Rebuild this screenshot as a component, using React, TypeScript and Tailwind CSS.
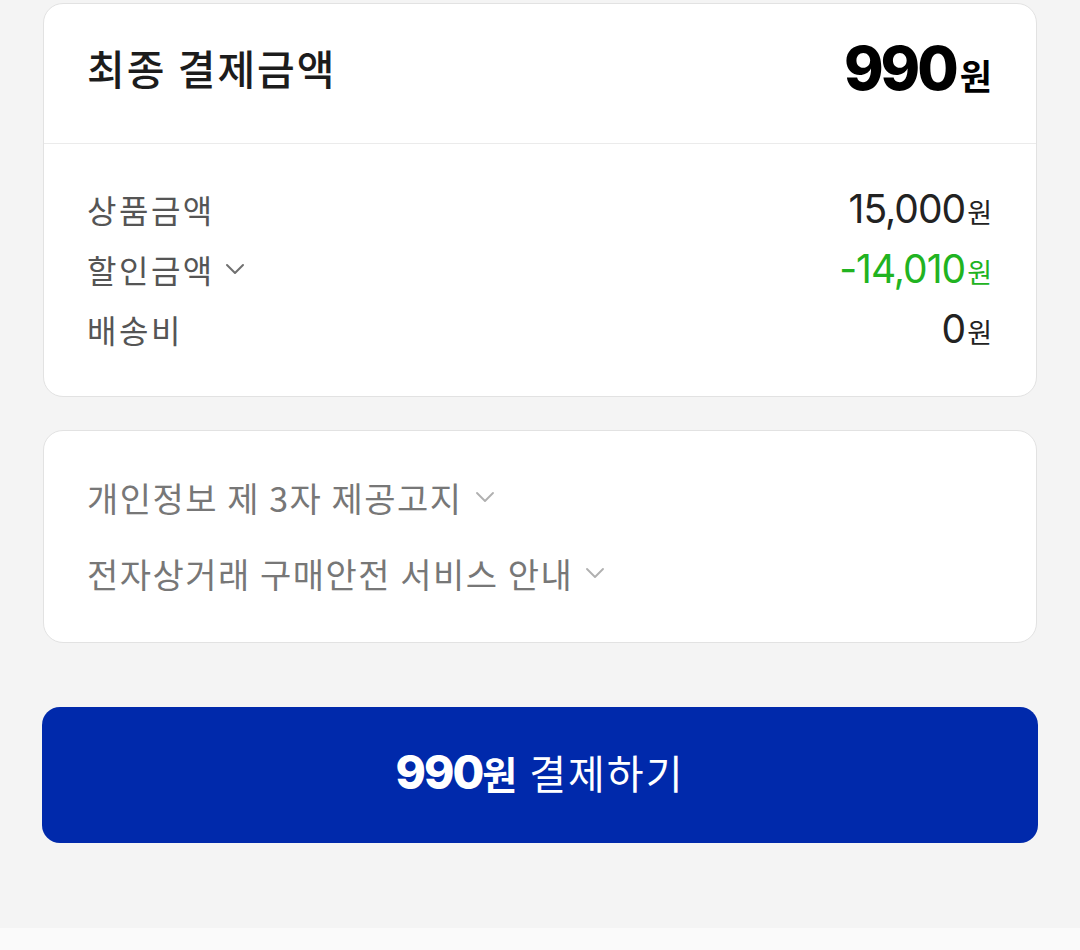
import { ChevronDown } from "lucide-react";

const kr = { fontFamily: "'Noto Sans CJK KR', 'Noto Sans', sans-serif" };
const num = { fontFamily: "Inter, 'Noto Sans CJK KR', sans-serif" };

interface Row {
  label: string;
  amount: string;
  green?: boolean;
  toggle?: boolean;
}

const rows: Row[] = [
  { label: "상품금액", amount: "15,000" },
  { label: "할인금액", amount: "-14,010", green: true, toggle: true },
  { label: "배송비", amount: "0" },
];

const notices = ["개인정보 제 3자 제공고지", "전자상거래 구매안전 서비스 안내"];

const App = () => {
  return (
    <div className="w-[1080px] h-[950px] bg-[#f4f4f4] flex flex-col overflow-hidden" style={kr}>
      <div className="px-[43px] pt-[3px]">
        {/* 결제금액 카드 */}
        <div className="bg-white border border-[#e2e2e2] rounded-[20px]">
          <div className="h-[140px] flex items-center justify-between pl-[43px] pr-[44px] pb-[12px] border-b border-[#ebebeb]">
            <span className="text-[41px] font-medium text-[#1c1c1c] tracking-[2px]">최종 결제금액</span>
            <span className="flex items-baseline text-black">
              <span className="text-[60px] font-extrabold tracking-[-3px]" style={num}>990</span>
              <span className="text-[35px] font-bold ml-[4px]">원</span>
            </span>
          </div>
          <div className="pt-[35px] pb-[37px] pl-[43px] pr-[44px]">
            {rows.map((row) => (
              <div key={row.label} className="h-[60px] flex items-center justify-between">
                <span className="flex items-center text-[32px] text-[#555555] tracking-[2.5px]">
                  {row.label}
                  {row.toggle && (
                    <ChevronDown className="ml-[4px] w-[32px] h-[32px] text-[#707070]" strokeWidth={1.5} />
                  )}
                </span>
                <span className={`flex items-baseline ${row.green ? "text-[#21b321]" : "text-[#222222]"}`}>
                  <span className="text-[39px] tracking-[-1px]" style={num}>{row.amount}</span>
                  <span className="text-[27px] ml-[2px]">원</span>
                </span>
              </div>
            ))}
          </div>
        </div>

        {/* 고지 카드 */}
        <div className="mt-[33px] bg-white border border-[#e2e2e2] rounded-[20px] pt-[28px] pb-[31px] pl-[43px]">
          {notices.map((text) => (
            <div key={text} className="h-[76px] flex items-center text-[34px] text-[#777777] tracking-[1.5px]">
              {text}
              <ChevronDown className="ml-[6px] w-[32px] h-[32px] text-[#b0b0b0]" strokeWidth={1.4} />
            </div>
          ))}
        </div>
      </div>

      <div className="px-[42px] pt-[64px]">
        <button className="w-full h-[136px] bg-[#0029ab] rounded-[18px] flex items-center justify-center pb-[6px] text-white">
          <span className="flex items-baseline">
            <span className="text-[46px] font-extrabold tracking-[-2px]" style={num}>990</span>
            <span className="text-[38px] font-bold">원</span>
          </span>
          <span className="text-[40px] ml-[12px] tracking-[2px]">결제하기</span>
        </button>
      </div>

      <div className="mt-[85px] flex-1 bg-[#fafafa]" />
    </div>
  );
};

export default App;
